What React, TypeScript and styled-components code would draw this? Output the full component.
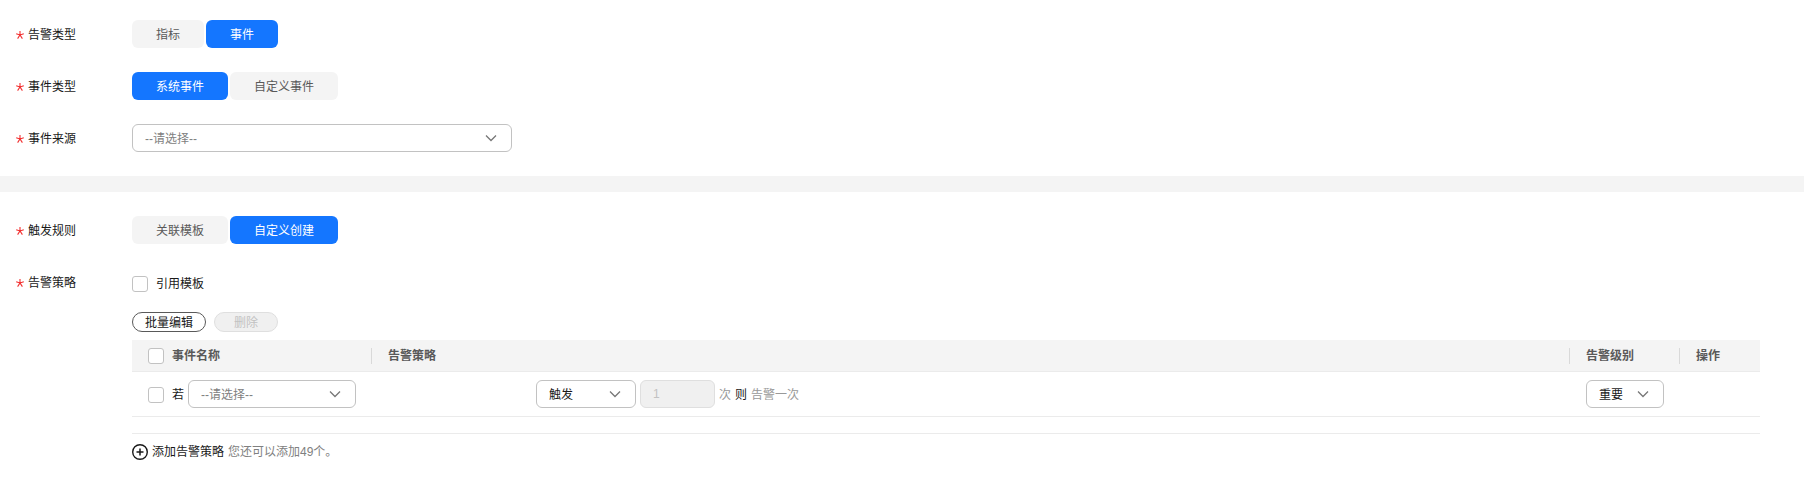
import React from 'react';
import styled, { createGlobalStyle, css } from 'styled-components';

const GlobalStyle = createGlobalStyle`
  *, *::before, *::after { box-sizing: border-box; }
  body {
    margin: 0;
    background: #fff;
    color: #191919;
    font-family: "Liberation Sans", "Noto Sans CJK SC", sans-serif;
    font-size: 12px;
    line-height: 20px;
  }
  button, input, select { font: inherit; color: inherit; margin: 0; }
`;

const Section = styled.section`
  display: flex;
  flex-direction: column;
  gap: 24px;
  padding: 20px 44px 24px 16px;

  & + & {
    border-top: 16px solid #f4f4f4;
    padding-top: 24px;
    padding-bottom: 16px;
  }
`;

const Field = styled.div`
  display: grid;
  grid-template-columns: 116px minmax(0, 1fr);
  align-items: start;
`;

const FieldLabel = styled.div`
  display: flex;
  align-items: center;
  gap: 4px;
  height: 28px;
  padding-top: 2px;
`;

const Star = styled.svg`
  width: 8px;
  height: 8px;
  fill: none;
  stroke: #f23030;
  stroke-width: 1.1;
`;

const Segments = styled.div`
  display: flex;
  gap: 2px;
`;

const Segment = styled.button<{ $active?: boolean }>`
  height: 28px;
  padding: 2px 24px 0;
  border: 0;
  border-radius: 6px;
  background: ${(p) => (p.$active ? '#1476ff' : '#f4f4f4')};
  color: ${(p) => (p.$active ? '#fff' : '#595959')};
  cursor: pointer;
`;

const SelectBox = styled.span<{ $width: number }>`
  position: relative;
  display: flex;
  width: ${(p) => p.$width}px;
  flex: none;
`;

const NativeSelect = styled.select<{ $placeholder?: boolean }>`
  appearance: none;
  width: 100%;
  height: 28px;
  padding: 2px 32px 0 12px;
  border: 1px solid #c2c2c2;
  border-radius: 6px;
  background: #fff;
  color: ${(p) => (p.$placeholder ? '#808080' : '#191919')};
`;

const Chevron = styled.svg`
  position: absolute;
  top: 8px;
  right: 15px;
  width: 12px;
  height: 12px;
  fill: none;
  stroke: #777;
  stroke-width: 1.3;
  pointer-events: none;
`;

const Checkbox = styled.input.attrs({ type: 'checkbox' })`
  appearance: none;
  flex: none;
  width: 16px;
  height: 16px;
  border: 1px solid #c2c2c2;
  border-radius: 3px;
  background: #fff;
`;

const Policy = styled.div`
  display: flex;
  flex-direction: column;
  padding-top: 6px;
`;

const CheckLabel = styled.label`
  display: flex;
  align-items: center;
  gap: 8px;
`;

const Actions = styled.div`
  display: flex;
  gap: 8px;
  padding: 18px 0 8px;
`;

const Pill = styled.button`
  height: 20px;
  padding: 1px 12px 0;
  border: 1px solid #595959;
  border-radius: 10px;
  background: #fff;
  line-height: 18px;

  &:disabled {
    padding: 1px 19px 0;
    border-color: #dfdfdf;
    background: #f0f0f0;
    color: #c2c2c2;
  }
`;

const Table = styled.table`
  width: 100%;
  table-layout: fixed;
  border-collapse: separate;
  border-spacing: 0;
`;

const cell = css`
  padding: 0 16px;
  border-bottom: 1px solid #ebebeb;
  text-align: left;
`;

const HeadCell = styled.th<{ $width?: number }>`
  ${cell}
  width: ${(p) => (p.$width ? `${p.$width}px` : 'auto')};
  height: 32px;
  background: #f4f4f4;
  background-image: linear-gradient(#d9d9d9, #d9d9d9);
  background-repeat: no-repeat;
  background-size: 1px 16px;
  background-position: right 0 top 8px;
  color: #595959;
  font-weight: 700;

  &:last-child { background-image: none; }
`;

const Cell = styled.td`
  ${cell}
  height: 45px;
`;

const Inline = styled.div<{ $gap: number }>`
  display: flex;
  align-items: center;
  gap: ${(p) => p.$gap}px;

  & > ${CheckLabel}, & > span:not(${SelectBox}) { padding-top: 2px; }
`;

const TriggerRule = styled(Inline)`
  padding-left: 148px;
`;

const CountInput = styled.input`
  width: 75px;
  height: 28px;
  padding: 0 12px;
  border: 1px solid #dfdfdf;
  border-radius: 6px;
  background: #f0f0f0;
  color: #c2c2c2;
`;

const Muted = styled.span`
  color: #999;
`;

const Hint = styled.span`
  color: #808080;
`;

const Footer = styled.div`
  display: flex;
  align-items: center;
  gap: 4px;
  margin-top: 16px;
  padding-top: 8px;
  border-top: 1px solid #ebebeb;
`;

const AddButton = styled.button`
  display: flex;
  align-items: center;
  gap: 4px;
  padding: 0;
  border: 0;
  background: none;
  cursor: pointer;
`;

const AddIcon = styled.svg`
  width: 16px;
  height: 16px;
  fill: none;
  stroke: #191919;
`;

function Required({ children }: { children: React.ReactNode }) {
  return (
    <FieldLabel>
      <Star viewBox="0 0 8 8" aria-hidden="true">
        <path d="M4 0v4M0.2 2.8L4 4l3.8-1.2M1.6 7.6L4 4l2.4 3.6" />
      </Star>
      {children}
    </FieldLabel>
  );
}

function Select({ label, value, width, placeholder }: {
  label: string; value: string; width: number; placeholder?: boolean;
}) {
  return (
    <SelectBox $width={width}>
      <NativeSelect aria-label={label} $placeholder={placeholder}>
        <option>{value}</option>
      </NativeSelect>
      <Chevron viewBox="0 0 12 12" aria-hidden="true">
        <path d="M1 3.5l5 5 5-5" />
      </Chevron>
    </SelectBox>
  );
}

function Choice({ label, options, active }: { label: string; options: string[]; active: number }) {
  return (
    <Field>
      <Required>{label}</Required>
      <Segments role="group" aria-label={label}>
        {options.map((option, i) => (
          <Segment key={option} type="button" $active={i === active} aria-pressed={i === active}>
            {option}
          </Segment>
        ))}
      </Segments>
    </Field>
  );
}

export default function App() {
  return (
    <>
      <GlobalStyle />
      <main>
        <Section>
          <Choice label="告警类型" options={['指标', '事件']} active={1} />
          <Choice label="事件类型" options={['系统事件', '自定义事件']} active={0} />
          <Field>
            <Required>事件来源</Required>
            <Select label="事件来源" value="--请选择--" width={380} placeholder />
          </Field>
        </Section>
        <Section>
          <Choice label="触发规则" options={['关联模板', '自定义创建']} active={1} />
          <Field>
            <Required>告警策略</Required>
            <Policy>
              <CheckLabel>
                <Checkbox />
                引用模板
              </CheckLabel>
              <Actions>
                <Pill type="button">批量编辑</Pill>
                <Pill type="button" disabled>删除</Pill>
              </Actions>
              <Table>
                <thead>
                  <tr>
                    <HeadCell $width={240}>
                      <Inline $gap={8}>
                        <Checkbox aria-label="事件名称" />
                        事件名称
                      </Inline>
                    </HeadCell>
                    <HeadCell>告警策略</HeadCell>
                    <HeadCell $width={110}>告警级别</HeadCell>
                    <HeadCell $width={80}>操作</HeadCell>
                  </tr>
                </thead>
                <tbody>
                  <tr>
                    <Cell>
                      <Inline $gap={4}>
                        <CheckLabel>
                          <Checkbox />
                          若
                        </CheckLabel>
                        <Select label="事件名称" value="--请选择--" width={168} placeholder />
                      </Inline>
                    </Cell>
                    <Cell>
                      <TriggerRule $gap={4}>
                        <Select label="触发方式" value="触发" width={100} />
                        <CountInput aria-label="次" value="1" disabled readOnly />
                        <Muted>次</Muted>
                        <span>则</span>
                        <Muted>告警一次</Muted>
                      </TriggerRule>
                    </Cell>
                    <Cell>
                      <Select label="告警级别" value="重要" width={78} />
                    </Cell>
                    <Cell />
                  </tr>
                </tbody>
              </Table>
              <Footer>
                <AddButton type="button">
                  <AddIcon viewBox="0 0 16 16" aria-hidden="true">
                    <circle cx="8" cy="8" r="7.3" strokeWidth="1.4" />
                    <path d="M8 4.5v7M4.5 8h7" strokeWidth="1.5" />
                  </AddIcon>
                  添加告警策略
                </AddButton>
                <Hint>您还可以添加49个。</Hint>
              </Footer>
            </Policy>
          </Field>
        </Section>
      </main>
    </>
  );
}
